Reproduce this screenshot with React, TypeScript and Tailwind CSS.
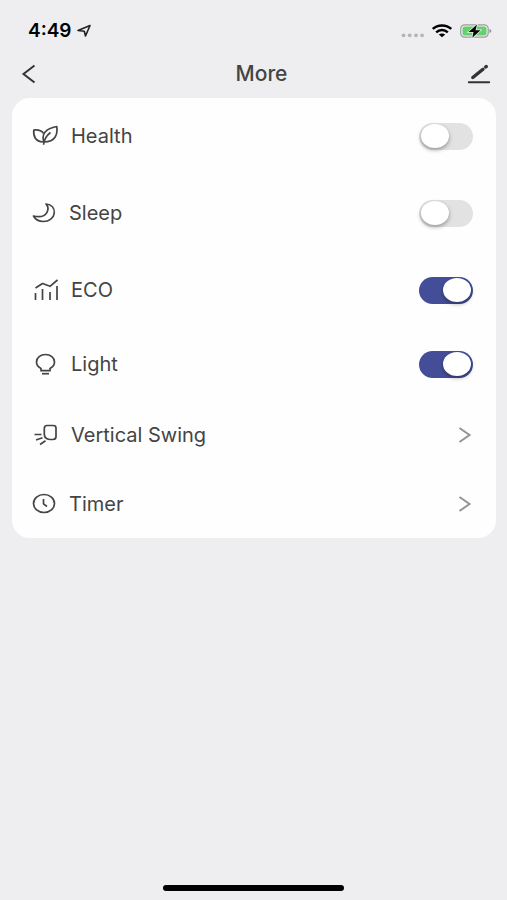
import { useState } from 'react';
import type { ReactNode } from 'react';

type Item = {
  id: string;
  label: string;
  height: string;
  icon: ReactNode;
  toggle?: boolean;
};

const wide = {
  className: 'w-[26px] h-[26px] shrink-0',
  viewBox: '0 0 26 26',
  fill: 'none',
  stroke: 'currentColor',
  strokeWidth: 1.7,
  strokeLinejoin: 'round' as const,
  'aria-hidden': true,
};

const narrow = { ...wide, className: 'w-6 h-[26px] shrink-0', viewBox: '0 0 24 26' };

const items: Item[] = [
  {
    id: 'health',
    label: 'Health',
    height: 'h-19',
    toggle: true,
    icon: (
      <svg {...wide}>
        <path d="M11.500 10.200C9.500 7.500 5.500 6.600 1.800 7C1.200 13.500 3.500 18.500 11 19" />
        <path d="M24.700 3.500C26 11 23.500 19 12 19C8.800 11 14 5.500 24.700 3.500Z" />
        <path d="M18.500 9.500C14.500 12.500 12 16.500 11.600 21.800" />
      </svg>
    ),
  },
  {
    id: 'sleep',
    label: 'Sleep',
    height: 'h-[78px]',
    toggle: true,
    icon: (
      <svg {...narrow}>
        <path d="M14 4C20 4.700 22.700 8.500 22.300 13C21.800 18 17 21.500 11.500 21.500C7 21.500 3.500 19.700 1.500 16C8 17.500 13 16 15 12.300C16.500 9.500 16.300 6.500 14 4Z" />
      </svg>
    ),
  },
  {
    id: 'eco',
    label: 'ECO',
    height: 'h-19',
    toggle: true,
    icon: (
      <svg {...wide}>
        <path d="M3.500 16V23M10.500 12V23M18 15V23M25 9V23" />
        <path d="M3.500 11L10.500 6.500L18 9.300L25.500 3" />
      </svg>
    ),
  },
  {
    id: 'light',
    label: 'Light',
    height: 'h-18',
    toggle: true,
    icon: (
      <svg {...wide}>
        <path d="M9 19.700V17.500C6 16 4.500 13.700 4.500 11C4.500 6.500 8.500 3.500 13.500 3.500S22.500 6.500 22.500 11C22.500 13.700 21 16 18 17.500V19.700Z" />
        <path d="M10 22.700H17" />
      </svg>
    ),
  },
  {
    id: 'swing',
    label: 'Vertical Swing',
    height: 'h-[70px]',
    icon: (
      <svg {...wide}>
        <path d="M15 3.500H21.500Q24 3.500 24 6V14.500Q24 17.500 21 17.500H18Q12.300 17 12.300 12V6.500Q12.300 3.500 15 3.500Z" />
        <path d="M2.500 12.500H9.500M4 18L10.500 15.800M8 22.500L13.500 18.800" />
      </svg>
    ),
  },
  {
    id: 'timer',
    label: 'Timer',
    height: 'h-17',
    icon: (
      <svg {...narrow}>
        <ellipse cx="12" cy="12.500" rx="10.500" ry="9" />
        <path d="M11.500 8V12.800L15 15.500" />
      </svg>
    ),
  },
];

function StatusBar() {
  return (
    <div className="flex h-[62px] items-center justify-between pl-7 pr-[15px]">
      <div className="flex items-center gap-1 text-black">
        <span className="text-[19px] font-semibold">4:49</span>
        <svg className="h-4 w-4" viewBox="0 0 16 16" fill="none" stroke="#222" strokeWidth="1.600" strokeLinejoin="round" aria-hidden>
          <path d="M14 2.500L2 7.500L8.300 8.300L9.500 13Z" />
        </svg>
      </div>
      <div className="flex items-center gap-2">
        <svg className="h-4 w-6" viewBox="0 0 24 16" fill="#b5b5b7" aria-hidden>
          <circle cx="3.500" cy="12.300" r="1.900" />
          <circle cx="9.700" cy="12.300" r="1.900" />
          <circle cx="16" cy="12.300" r="1.900" />
          <circle cx="22.100" cy="12.300" r="1.900" />
        </svg>
        <svg className="h-4 w-5" viewBox="0 0 20 16" fill="none" stroke="#000" strokeWidth="2.500" aria-hidden>
          <path d="M0.800 6C5.500 1.200 14.500 1.200 19.200 6" />
          <path d="M4.200 9.300C7.500 6.300 12.500 6.300 15.800 9.300" />
          <path d="M6.800 11.600C8.500 10 11.500 10 13.200 11.600L10 14.300Z" fill="#000" stroke="none" />
        </svg>
        <svg className="h-4 w-8" viewBox="0 0 32 16" aria-hidden>
          <rect x="0.700" y="1.800" width="27.500" height="12.400" rx="4" fill="#eeeeee" stroke="#9d9da0" strokeWidth="1.200" />
          <rect x="2.500" y="3.500" width="24" height="9" rx="2.500" fill="#66cf70" />
          <path d="M29.500 6V10Q31.300 9.500 31.300 8T29.500 6Z" fill="#8d8d90" />
          <path d="M17 1.500L8.500 9H13.500L12.300 14.800L20.500 7.200H15.500Z" fill="#000" stroke="#e4f3e5" strokeWidth="1.500" paintOrder="stroke" />
        </svg>
      </div>
    </div>
  );
}

function Header() {
  return (
    <header className="flex h-6 items-center justify-between px-4">
      <button aria-label="Back" className="flex h-6 w-10 items-center text-[#333]">
        <svg className="h-5 w-6" viewBox="0 0 24 20" fill="none" stroke="currentColor" strokeWidth="2" aria-hidden>
          <path d="M18.500 1.500L7.500 10L18.500 18.500" />
        </svg>
      </button>
      <h1 className="text-[21px] font-medium text-[#444]">More</h1>
      <button aria-label="Edit" className="flex h-6 w-6 items-center justify-center text-[#333]">
        <svg className="h-6 w-6" viewBox="0 0 24 24" fill="none" stroke="currentColor" strokeLinecap="round" aria-hidden>
          <path d="M1.800 20.300H22.200" strokeWidth="2" />
          <path d="M5.800 15.500L16 7.200" strokeWidth="3.400" />
          <path d="M18.800 4.900L19.200 4.600" strokeWidth="3.600" />
        </svg>
      </button>
    </header>
  );
}

export default function App() {
  const [enabled, setEnabled] = useState<Record<string, boolean>>({
    health: false,
    sleep: false,
    eco: true,
    light: true,
  });

  const rowClass = 'flex w-full items-center justify-between pl-5 pr-[23px]';

  return (
    <div className="flex min-h-screen flex-col bg-[#eeeef0] font-['Inter','Liberation_Sans',sans-serif]">
      <StatusBar />
      <Header />

      <main className="ml-3 mr-[11px] mt-3 overflow-hidden rounded-[18px] bg-[#fefefe] text-xl text-[#444]">
        {items.map((item) => {
          const title = (
            <span className="flex items-center gap-[13px]">
              {item.icon}
              <span>{item.label}</span>
            </span>
          );

          if (item.toggle) {
            return (
              <label key={item.id} className={`${rowClass} ${item.height}`}>
                {title}
                <input
                  type="checkbox"
                  role="switch"
                  checked={enabled[item.id]}
                  onChange={(e) => setEnabled({ ...enabled, [item.id]: e.target.checked })}
                  className="flex h-[27px] w-[54px] shrink-0 appearance-none items-center rounded-full bg-[#e2e2e2] px-0.5 transition-colors before:h-6 before:w-7 before:rounded-[50%] before:bg-white before:shadow-[0_2px_4px_rgba(0,0,0,0.35)] checked:justify-end checked:bg-[#444e98]"
                />
              </label>
            );
          }

          return (
            <button key={item.id} className={`${rowClass} ${item.height}`}>
              {title}
              <svg className="h-4 w-4 text-[#949494]" viewBox="0 0 16 16" fill="none" stroke="currentColor" strokeWidth="2" aria-hidden>
                <path d="M2.500 1L12.500 8L2.500 15" />
              </svg>
            </button>
          );
        })}
      </main>

      <div className="mx-auto mb-[9px] mt-auto h-[6px] w-[181px] rounded-full bg-black" />
    </div>
  );
}
